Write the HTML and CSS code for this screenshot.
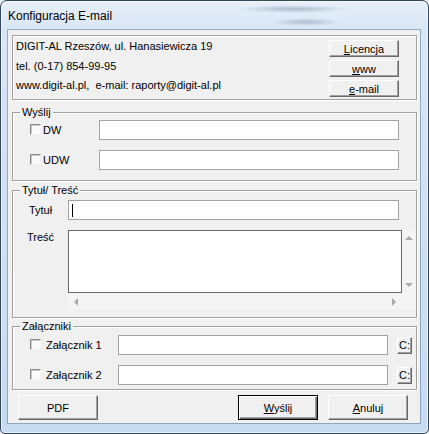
FILE: index.html
```html
<!DOCTYPE html>
<html lang="pl">
<head>
    <meta charset="UTF-8">
    <meta name="viewport" content="width=device-width, initial-scale=1.0">
    <title>Konfiguracja E-mail</title>
    <link rel="stylesheet" href="styles.css">
</head>
<body>

    <!-- Dialog window -->
    <div class="window">
        <div class="titlebar">Konfiguracja E-mail</div>

        <div class="client">

            <!-- Company info -->
            <div class="info">
                <div class="info-text">
                    <div>DIGIT-AL Rzeszów, ul. Hanasiewicza 19</div>
                    <div>tel. (0-17) 854-99-95</div>
                    <div>www.digit-al.pl,&nbsp; e-mail: raporty@digit-al.pl</div>
                </div>
                <div class="info-buttons">
                    <button class="btn small"><u>L</u>icencja</button>
                    <button class="btn small"><u>w</u>ww</button>
                    <button class="btn small"><u>e</u>-mail</button>
                </div>
            </div>

            <!-- Send copies -->
            <section class="group send">
                <div class="group-title">Wyślij</div>
                <div class="send-rows">
                    <div class="send-row">
                        <label class="check-label"><span class="check"></span>DW</label>
                        <div class="edit"></div>
                    </div>
                    <div class="send-row">
                        <label class="check-label"><span class="check"></span>UDW</label>
                        <div class="edit"></div>
                    </div>
                </div>
            </section>

            <!-- Subject / body -->
            <section class="group message">
                <div class="group-title">Tytuł/ Treść</div>
                <div class="message-body">
                    <div class="subject-row">
                        <div class="field-label">Tytuł</div>
                        <div class="edit"><span class="caret"></span></div>
                    </div>
                    <div class="memo-row">
                        <div class="field-label">Treść</div>
                        <div class="memo">
                            <div class="memo-text"></div>
                            <div class="vscroll">
                                <span class="scroll-btn"><span class="arrow-up"></span></span>
                                <span class="scroll-btn"><span class="arrow-down"></span></span>
                            </div>
                            <div class="hscroll">
                                <span class="scroll-btn"><span class="arrow-left"></span></span>
                                <span class="scroll-btn"><span class="arrow-right"></span></span>
                            </div>
                            <div class="corner"></div>
                        </div>
                    </div>
                </div>
            </section>

            <!-- Attachments -->
            <section class="group attachments">
                <div class="group-title">Załączniki</div>
                <div class="attach-rows">
                    <div class="attach-row">
                        <label class="check-label wide"><span class="check"></span>Załącznik 1</label>
                        <div class="edit"></div>
                        <button class="btn tiny">C:</button>
                    </div>
                    <div class="attach-row">
                        <label class="check-label wide"><span class="check"></span>Załącznik 2</label>
                        <div class="edit"></div>
                        <button class="btn tiny">C:</button>
                    </div>
                </div>
            </section>

            <!-- Dialog buttons -->
            <div class="actions">
                <button class="btn big">PDF</button>
                <button class="btn big default"><u>W</u>yślij</button>
                <button class="btn big"><u>A</u>nuluj</button>
            </div>

        </div>
    </div>

</body>
</html>
```

FILE: styles.css
```css
/* Reset */
* {
    box-sizing: border-box;
}

html, body {
    margin: 0;
    padding: 0;
}

body {
    background: #e6ecf3;
    font-family: "Liberation Sans", Arial, sans-serif;
    font-size: 11px;
    color: #000;
}

/* Window frame (Aero style) */
.window {
    width: 429px;
    height: 434px;
    display: flex;
    flex-direction: column;
    padding: 0 8px 10px 7px;
    border: 1px solid #33465c;
    border-radius: 7px 7px 5px 5px;
    background:
        radial-gradient(ellipse 55px 4px at 292px 8px, rgba(105, 125, 155, 0.45), transparent),
        radial-gradient(ellipse 35px 4px at 305px 21px, rgba(105, 125, 155, 0.4), transparent),
        linear-gradient(to bottom, #e6eff9 0, #d8e6f5 30px, #c6daf0 100%);
    box-shadow: inset 0 0 0 1px rgba(255, 255, 255, 0.6);
}

.titlebar {
    height: 29px;
    display: flex;
    align-items: center;
    font-size: 12px;
    padding-top: 1px;
}

/* Client area */
.client {
    height: 393px;
    display: flex;
    flex-direction: column;
    padding: 5px 3px 3px 4px;
    background: #f0f0f0;
    box-shadow: 0 0 0 1px rgba(70, 100, 140, 0.45);
}

/* Etched boxes */
.info,
.group {
    border: 1px solid #a0a0a0;
    box-shadow: inset 1px 1px #fff, 1px 1px #fff;
}

.info {
    height: 65px;
    display: flex;
    justify-content: space-between;
    padding: 1px 17px 0 3px;
}

.info-text {
    line-height: 19.5px;
}

.info-buttons {
    display: flex;
    flex-direction: column;
    gap: 3px;
    padding-top: 3px;
}

.group-title {
    width: fit-content;
    height: 14px;
    line-height: 14px;
    margin: -8px 0 0 7px;
    padding: 0 2px;
    background: #f0f0f0;
}

.send {
    margin-top: 12px;
}

.message {
    margin-top: 9px;
}

.attachments {
    margin-top: 8px;
}

/* Classic buttons */
.btn {
    font: inherit;
    color: #000;
    padding: 0;
    background: #f0f0f0;
    border: 1px solid;
    border-color: #fff #696969 #696969 #fff;
    box-shadow: inset -1px -1px #a0a0a0;
    cursor: pointer;
}

.btn.small {
    width: 70px;
    height: 17px;
}

.btn.tiny {
    width: 15px;
    height: 17px;
    justify-self: end;
}

.btn.big {
    width: 80px;
    height: 25px;
}

.btn.default {
    border-color: #000;
    box-shadow: inset 1px 1px #fff, inset -1px -1px #696969, inset -2px -2px #a0a0a0;
}

/* Edit fields */
.edit {
    height: 20px;
    background: #fff;
    border: 1px solid #a3a3a3;
}

.caret {
    display: block;
    width: 1px;
    height: 13px;
    margin: 3px 0 0 3px;
    background: #000;
}

/* Checkboxes */
.check-label {
    display: flex;
    align-items: center;
    gap: 2px;
}

.check-label.wide {
    gap: 5px;
}

.check {
    width: 11px;
    height: 11px;
    margin-bottom: 1px;
    background: #fafafa;
    border: 1px solid;
    border-color: #8a8a8a #f4f4f4 #f4f4f4 #8a8a8a;
    box-shadow: inset 1px 1px #c8c8c8;
}

/* Wyślij rows */
.send-rows {
    display: flex;
    flex-direction: column;
    gap: 10px;
    padding: 1px 17px 10px 17px;
}

.send-row {
    display: grid;
    grid-template-columns: 69px 300px;
    align-items: center;
}

/* Tytuł / Treść */
.message-body {
    display: flex;
    flex-direction: column;
    gap: 10px;
    padding: 3px 0 7px 0;
}

.subject-row {
    display: grid;
    grid-template-columns: 55px 331px;
    align-items: center;
}

.field-label {
    text-align: center;
    line-height: 14px;
}

.memo-row {
    display: grid;
    grid-template-columns: 55px 348px;
}

.memo {
    display: grid;
    grid-template-columns: 334px 14px;
    grid-template-rows: 63px 17px;
}

.memo-text {
    background: #fff;
    border: 1px solid #686868;
}

.vscroll,
.hscroll,
.corner {
    background: #f4f4f4;
}

.vscroll {
    display: flex;
    flex-direction: column;
    justify-content: space-between;
}

.hscroll {
    display: flex;
    justify-content: space-between;
}

.scroll-btn {
    display: flex;
    align-items: center;
    justify-content: center;
}

.vscroll .scroll-btn {
    height: 16px;
}

.hscroll .scroll-btn {
    width: 16px;
}

.arrow-up,
.arrow-down,
.arrow-left,
.arrow-right {
    width: 0;
    height: 0;
    border: 4px solid transparent;
}

.arrow-up {
    border-top: 0;
    border-bottom-color: #a8a8a8;
}

.arrow-down {
    border-bottom: 0;
    border-top-color: #a8a8a8;
}

.arrow-left {
    border-left: 0;
    border-right-color: #a8a8a8;
}

.arrow-right {
    border-right: 0;
    border-left-color: #a8a8a8;
}

/* Załączniki */
.attach-rows {
    display: flex;
    flex-direction: column;
    gap: 10px;
    padding: 2px 4px 4px 17px;
}

.attach-row {
    display: grid;
    grid-template-columns: 88px 270px 24px;
    align-items: center;
}

/* Bottom buttons */
.actions {
    display: flex;
    gap: 10px;
    margin-top: 5px;
    padding: 0 9px 0 6px;
}

.actions .default {
    margin-left: auto;
}
```
